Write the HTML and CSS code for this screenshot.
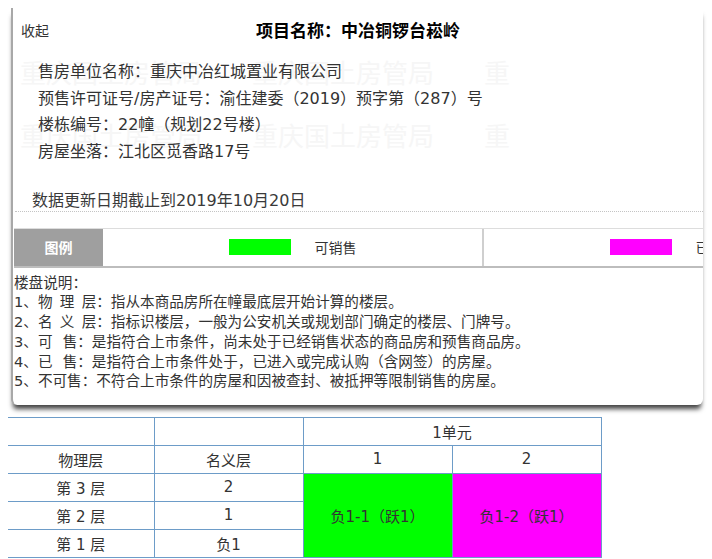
FILE: index.html
```html
<!DOCTYPE html>
<html lang="zh-CN">
<head>
  <meta charset="UTF-8">
  <title>楼盘表</title>
  <link rel="stylesheet" href="styles.css">
</head>
<body>

  <div class="panel">
    <div class="panel-head">
      <a class="fold">收起</a>
      <h1 class="title">项目名称：中冶铜锣台崧岭</h1>
    </div>

    <div class="info">
      <div class="watermark">
        <div class="wm-row"><span>重庆国土房管局</span><span>重庆国土房管局</span><span>重</span></div>
        <div class="wm-row"><span>重庆国土房管局</span><span>重庆国土房管局</span><span>重</span></div>
      </div>
      <p>售房单位名称：重庆中冶红城置业有限公司</p>
      <p>预售许可证号/房产证号：渝住建委（2019）预字第（287）号</p>
      <p>楼栋编号：22幢（规划22号楼）</p>
      <p>房屋坐落：江北区觅香路17号</p>
    </div>

    <div class="update">数据更新日期截止到2019年10月20日</div>

    <div class="legend">
      <div class="legend-label">图例</div>
      <div class="legend-item"><span class="swatch green"></span>可销售</div>
      <div class="legend-item"><span class="swatch magenta"></span>已销售</div>
    </div>

    <div class="notes">
      <p>楼盘说明：</p>
      <p>1、物&ensp;理&ensp;层：指从本商品房所在幢最底层开始计算的楼层。</p>
      <p>2、名&ensp;义&ensp;层：指标识楼层，一般为公安机关或规划部门确定的楼层、门牌号。</p>
      <p>3、可&ensp;&thinsp;售：是指符合上市条件，尚未处于已经销售状态的商品房和预售商品房。</p>
      <p>4、已&ensp;&thinsp;售：是指符合上市条件处于，已进入或完成认购（含网签）的房屋。</p>
      <p>5、不可售：不符合上市条件的房屋和因被查封、被抵押等限制销售的房屋。</p>
    </div>
  </div>

  <table class="floors">
    <colgroup>
      <col class="c-first">
      <col class="c-col">
      <col class="c-col">
      <col class="c-col">
    </colgroup>
    <tr>
      <td></td>
      <td></td>
      <td colspan="2">1单元</td>
    </tr>
    <tr>
      <td>物理层</td>
      <td>名义层</td>
      <td>1</td>
      <td>2</td>
    </tr>
    <tr>
      <td>第 3 层</td>
      <td>2</td>
      <td rowspan="3" class="room green">负1-1（跃1）</td>
      <td rowspan="3" class="room magenta">负1-2（跃1）</td>
    </tr>
    <tr>
      <td>第 2 层</td>
      <td>1</td>
    </tr>
    <tr>
      <td>第 1 层</td>
      <td>负1</td>
    </tr>
  </table>

</body>
</html>
```

FILE: styles.css
```css
body {
  margin: 0;
  font-family: "DejaVu Sans", "Noto Sans CJK SC", sans-serif;
  color: #333;
  background-color: #fff;
  text-spacing-trim: space-all;
}

.panel {
  position: relative;
  width: 690px;
  margin: 8px 0 0 11px;
  padding-bottom: 14px;
  background-color: #fff;
  border-left: 2px solid #a8a8a8;
  border-radius: 0 0 6px 6px;
  box-shadow: 0 6px 5px -2px rgba(0, 0, 0, 0.75);
  overflow: hidden;
}

.panel-head {
  display: grid;
  grid-template-columns: 1fr auto 1fr;
  align-items: center;
  padding-top: 12px;
}

.fold {
  padding-left: 8px;
  font-family: "Noto Sans CJK SC", sans-serif;
  font-size: 14px;
  line-height: 20px;
  color: #333;
}

.title {
  margin: 0;
  font-family: "Noto Sans CJK SC", sans-serif;
  font-size: 17px;
  font-weight: bold;
  line-height: 20px;
  color: #000;
}

.info {
  position: relative;
  padding: 19px 0 0 25px;
  font-size: 16px;
  line-height: 26.67px;
}

.info p {
  position: relative;
  margin: 0;
}

.watermark {
  position: absolute;
  left: 7px;
  top: 12px;
  white-space: nowrap;
  color: #f6f6f6;
  font-family: "Noto Sans CJK SC", sans-serif;
  font-size: 26px;
  line-height: 40px;
}

.wm-row {
  height: 63px;
}

.wm-row span {
  margin-right: 50px;
}

.update {
  margin: 25px 0 0 2px;
  padding-left: 17px;
  font-size: 16px;
  line-height: 20px;
  color: #3a3a3a;
  border-bottom: 1px dotted #c4c4c4;
}

.legend {
  display: flex;
  height: 37px;
  margin: 16px 0 0 1px;
  border-top: 1px solid #ddd;
  border-bottom: 2px solid #bdbdbd;
}

.legend-label {
  flex: 0 0 89px;
  display: flex;
  align-items: center;
  justify-content: center;
  background-color: #9f9f9f;
  color: #fff;
  font-family: "Noto Sans CJK SC", sans-serif;
  font-size: 14px;
  font-weight: bold;
}

.legend-item {
  flex: 0 0 379px;
  display: flex;
  align-items: center;
  justify-content: center;
  gap: 24px;
  border-right: 2px solid #cfcfcf;
  font-family: "Noto Sans CJK SC", sans-serif;
  font-size: 14px;
}

.swatch {
  width: 62px;
  height: 16px;
}

.green {
  background-color: #00ff00;
}

.magenta {
  background-color: #ff00ff;
}

.notes {
  padding: 5px 0 0 1px;
  font-size: 14.6px;
  line-height: 19.7px;
}

.notes p {
  margin: 0;
}

.floors {
  width: 593px;
  margin: 12px 0 0 8px;
  border-collapse: collapse;
  table-layout: fixed;
  font-size: 15px;
  color: #333;
}

.c-first {
  width: 146px;
}

.c-col {
  width: 149px;
}

.floors td {
  height: 27px;
  padding: 0;
  text-align: center;
  border: 1px solid #6d9cc8;
}

.floors td:first-child {
  border-left: none;
}

.floors .room {
  border-left: 1px solid #6d9cc8;
}
```
